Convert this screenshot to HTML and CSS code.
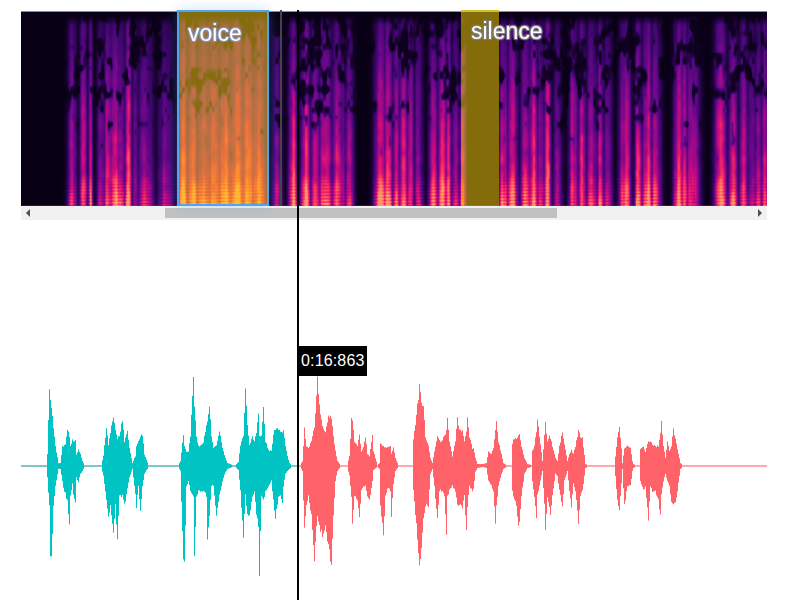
FILE: index.html
```html
<!DOCTYPE html>
<html lang="en">
<head>
  <meta charset="UTF-8">
  <title>Audio annotator</title>
  <link rel="stylesheet" href="styles.css">
</head>
<body>

<div class="editor">
  <div class="spectro">
    <canvas id="spectroCanvas" width="746" height="194"></canvas>
    <div class="region region-voice"><span class="region-label">voice</span></div>
    <div class="region region-silence"><span class="region-label">silence</span></div>
    <div class="progress-mark"></div>
  </div>

  <div class="scrollbar">
    <span class="arrow arrow-left"></span>
    <div class="track"><div class="thumb"></div></div>
    <span class="arrow arrow-right"></span>
  </div>

  <div class="wave">
    <canvas id="waveCanvas" width="746" height="254"></canvas>
    <div class="time-tip">0:16:863</div>
  </div>

  <div class="cursor"></div>
</div>

<script src="app.js"></script>
</body>
</html>
```

FILE: styles.css
```css
body {
  margin: 0;
  background: #fff;
  font-family: 'Liberation Sans', Arial, sans-serif;
  overflow: hidden;
}
.editor {
  position: relative;
  width: 746px;
  height: 600px;
  margin-left: 21px;
  padding-top: 11px;
  box-sizing: border-box;
}
.spectro {
  position: relative;
  height: 195px;
  border-top: 1px solid #8f8d94;
  box-sizing: border-box;
}
.spectro canvas {
  display: block;
}
.region {
  position: absolute;
  top: -2px;
  bottom: 0;
  background: rgba(255, 215, 0, 0.5);
  box-sizing: border-box;
}
.region-voice {
  left: 156px;
  width: 92px;
  border: 2px solid #4fa6ee;
  box-shadow: 0 0 12px rgba(79, 166, 238, 0.3);
}
.region-silence {
  left: 440px;
  width: 38px;
  border-top: 2px solid #d9bf2e;
}
.region-label {
  position: absolute;
  top: 8px;
  left: 9px;
  font-size: 23px;
  line-height: 26px;
  color: #fff;
  text-shadow: 1px 1px 1px #8a93b8, -1px -1px 1px #8a93b8, 1px -1px 1px #8a93b8, -1px 1px 1px #8a93b8, 0 0 2px #8a93b8;
}
.region-silence .region-label {
  left: 10px;
  top: 6px;
  text-shadow: 1px 1px 1px #808080, -1px -1px 1px #808080, 1px -1px 1px #808080, -1px 1px 1px #808080, 0 0 2px #808080;
}
.progress-mark {
  position: absolute;
  top: -2px;
  bottom: 0;
  left: 259px;
  width: 2px;
  background: #444;
}
.scrollbar {
  display: flex;
  align-items: center;
  height: 14px;
  background: #f1f1f1;
}
.arrow {
  width: 0;
  height: 0;
  border-top: 4px solid transparent;
  border-bottom: 4px solid transparent;
}
.arrow-left {
  margin-left: 5px;
  border-right: 4px solid #505050;
}
.arrow-right {
  margin-right: 5px;
  border-left: 4px solid #505050;
}
.track {
  flex: 1;
  height: 10px;
  padding-left: 135px;
}
.thumb {
  width: 392px;
  height: 10px;
  background: #c1c1c1;
}
.wave {
  position: relative;
  margin-top: 126px;
}
.wave canvas {
  display: block;
  filter: blur(0.5px);
}
.time-tip {
  position: absolute;
  top: 0;
  left: 277px;
  padding: 0 3px 0 3px;
  line-height: 30px;
  font-size: 16px;
  letter-spacing: 0.15px;
  color: #fff;
  background: #000;
}
.cursor {
  position: absolute;
  top: 10px;
  bottom: 0;
  left: 276px;
  width: 2px;
  background: #000;
}
```

FILE: app.js
```js
// little seeded noise so every render gives the same picture
function hash(x, y) {
  const s = Math.sin(x * 127.1 + y * 311.7) * 43758.5453;
  return s - Math.floor(s);
}
function smoothNoise(x, y) {
  const ix = Math.floor(x), iy = Math.floor(y);
  let fx = x - ix, fy = y - iy;
  fx = fx * fx * (3 - 2 * fx);
  fy = fy * fy * (3 - 2 * fy);
  const a = hash(ix, iy), b = hash(ix + 1, iy);
  const c = hash(ix, iy + 1), d = hash(ix + 1, iy + 1);
  return (a + (b - a) * fx) * (1 - fy) + (c + (d - c) * fx) * fy;
}

// --- spectrogram ---
// [page x, half width, strength]
const columns = [
  [72, 4, .66], [83, 3, .86], [90, 2, .76], [101, 4, .6], [108, 5, .74], [114, 6, .82],
  [120, 4, .66], [128, 3, .9], [135, 3, .55], [145, 7, .6], [165, 6, .56],
  [183, 4, .92], [192, 5, .98], [203, 6, .92], [214, 5, .96], [225, 6, 1], [236, 6, 1], [247, 6, .92], [258, 6, .94],
  [277, 4, .56], [293, 4, .86], [305, 4, .92], [315, 5, .76], [325, 6, .8], [338, 6, .76], [349, 4, .66],
  [380, 5, .86], [388, 4, .88], [396, 4, .76], [403, 4, .82], [410, 4, .66], [418, 4, .58],
  [433, 4, .72], [442, 4, .86], [448, 3, .76], [455, 4, .6], [462, 3, .6],
  [503, 4, .76], [512, 5, .76], [525, 4, .76], [533, 4, .9], [540, 4, .66], [547, 3, .94], [557, 4, .58],
  [573, 4, .82], [582, 4, .76], [592, 6, .66], [600, 3, .78], [607, 4, .62],
  [625, 5, .82], [638, 3, .88], [647, 5, .88], [655, 5, .66], [678, 4, .86], [684, 3, .82], [692, 6, .76],
  [720, 5, .86], [733, 4, .82], [743, 4, .82], [752, 4, .6], [758, 4, .66], [765, 4, .76]
];
const inferno = [
  [0, 8, 0, 20], [.24, 62, 6, 112], [.42, 118, 8, 142], [.6, 205, 10, 122],
  [.8, 255, 60, 92], [1, 255, 150, 104]
];
function colorAt(v) {
  v = Math.max(0, Math.min(1, v));
  for (let i = 1; i < inferno.length; i++) {
    if (v <= inferno[i][0]) {
      const p = inferno[i - 1], q = inferno[i];
      const t = (v - p[0]) / (q[0] - p[0]);
      return [p[1] + (q[1] - p[1]) * t, p[2] + (q[2] - p[2]) * t, p[3] + (q[3] - p[3]) * t];
    }
  }
  return inferno[inferno.length - 1].slice(1);
}
function columnStrength(px) {
  if (px > 466 && px < 499) return 0;
  let best = 0;
  columns.forEach(c => {
    const d = (px - c[0]) / c[1];
    best = Math.max(best, c[2] * Math.exp(-d * d * .7));
  });
  return best;
}
function drawSpectro() {
  const canvas = document.getElementById('spectroCanvas');
  const ctx = canvas.getContext('2d');
  const img = ctx.createImageData(canvas.width, canvas.height);
  for (let x = 0; x < canvas.width; x++) {
    const c = columnStrength(x + 21) * (.78 + .34 * smoothNoise(x / 2.5, 7));
    const voice = x > 156 && x < 248;
    for (let y = 0; y < canvas.height; y++) {
      const t = y / canvas.height;
      const blotch = smoothNoise(x / 8, y / 16) * .6 + smoothNoise(x / 3, y / 7) * .4;
      const fade = Math.min(1, Math.max(.05, (t - .015) / .05));
      // dark holes in the upper half, gone towards the low frequencies
      const hole = Math.max(.12, Math.min(1, (blotch - .3) / .2 + Math.max(0, t - .4) * 5 + (voice ? .25 : 0)));
      let v = c * (.3 + .66 * t) * (.8 + .45 * blotch) * fade * hole * (voice ? .9 : 1);
      if (t > .82) {
        const stripes = .5 + .5 * Math.sin(y * 1.9 + x * .05);
        const patch = smoothNoise(x / 8, 3);
        v += c * ((t - .82) / .18) * (.15 + .26 * stripes) * (.3 + 1.2 * patch);
      }
      if (t > .99) v = Math.max(v, c * .7 + .22);
      const rgb = colorAt(v);
      const i = (y * canvas.width + x) * 4;
      img.data[i] = rgb[0];
      img.data[i + 1] = rgb[1];
      img.data[i + 2] = rgb[2];
      img.data[i + 3] = 255;
    }
  }
  ctx.putImageData(img, 0, 0);
}

// --- waveform ---
// [page x, amplitude up, amplitude down]
const envelope = [
  [21,1,1],[46,1,1],[47,12,12],[49,81,40],[50,70,93],[51,60,92],[53,40,40],[55,20,20],[58,3,3],[60,3,3],
  [62,20,15],[63,20,22],[65,22,28],[67,36,35],[68,35,50],[69,30,62],[70,20,30],[72,27,18],[73,26,30],[75,25,35],[76,12,12],[78,17,16],[80,12,8],[82,5,5],[84,1,1],
  [101,1,1],[103,10,10],[106,40,35],[108,20,50],[110,35,40],[113,50,69],[115,35,40],[117,28,76],[119,30,30],[122,47,30],[124,25,40],[127,36,22],[129,18,12],[132,3,3],
  [135,10,28],[136,20,41],[138,25,20],[140,30,46],[142,32,20],[144,12,8],[148,1,1],
  [178,1,1],[180,5,5],[183,32,98],[184,20,98],[186,15,20],[188,15,15],[190,30,25],[193,92,30],[194,60,91],[196,30,30],[198,20,25],[200,20,25],[203,25,25],[206,40,30],[207,45,71],[209,61,50],[211,30,20],[213,18,20],[216,20,48],[219,36,30],[222,18,15],[225,8,6],[227,3,3],
  [232,1,1],[235,1,1],[238,4,4],[240,21,25],[243,30,71],[245,82,30],[247,40,50],[249,22,50],[252,29,30],[254,25,25],[256,35,50],[258,54,60],[259,30,108],[261,30,30],[263,59,35],[265,25,25],[268,16,20],[271,15,15],[274,38,45],[275,38,53],[278,38,30],[280,36,30],[282,35,39],[283,37,20],[285,20,8],[287,10,5],[289,3,3],[291,1,1],
  [300,1,1],[302,5,5],[304,37,64],[306,20,40],[308,18,30],[311,25,50],[314,40,98],[316,70,60],[317,91,50],[319,60,60],[322,39,70],[325,35,60],[328,51,80],[331,50,101],[333,30,50],[335,15,15],[337,5,5],[340,1,1],[347,1,1],
  [349,10,10],[351,47,30],[352,45,56],[354,25,30],[357,20,35],[359,31,54],[361,15,25],[363,20,20],[365,30,20],[367,12,30],[369,10,35],[372,32,15],[373,15,4],[377,1,1],
  [379,3,3],[380,22,40],[383,20,69],[385,18,30],[387,18,22],[390,20,25],[391,12,50],[393,18,18],[395,8,5],[398,1,1],
  [412,1,1],[413,28,25],[416,50,60],[419,80,100],[421,65,80],[423,59,55],[425,30,40],[428,20,40],[430,8,8],[432,3,3],
  [434,15,20],[437,31,55],[439,25,25],[442,25,25],[444,32,30],[446,35,70],[447,47,30],[449,25,25],[452,10,20],[455,25,25],[457,49,38],[458,40,41],[460,35,40],[462,35,42],[464,25,30],[466,35,65],[467,47,40],[469,30,20],[472,18,25],[473,19,24],[475,8,6],[477,2,2],
  [483,2,1],[486,3,2],[488,15,15],[491,12,20],[493,18,25],[495,35,61],[496,44,40],[498,25,20],[501,12,8],[503,3,3],[506,1,1],[511,1,1],
  [512,22,25],[513,27,30],[516,28,40],[518,30,63],[519,31,55],[521,20,30],[524,8,8],[527,2,2],[531,1,1],
  [532,15,15],[534,20,30],[536,35,55],[537,49,30],[539,30,20],[542,5,5],[544,30,40],[545,44,65],[547,25,30],[549,30,40],[550,28,50],[552,20,30],[555,8,8],[557,5,10],[559,20,25],[562,34,40],[564,22,15],[567,5,5],
  [569,12,25],[571,16,40],[573,12,18],[575,20,25],[578,35,56],[580,30,30],[582,28,25],[585,2,2],[587,1,1],[614,1,1],
  [615,10,10],[617,30,35],[619,40,43],[621,18,18],[622,3,3],[624,18,40],[627,20,20],[630,18,20],[632,5,5],[633,2,2],[635,1,1],[639,1,1],
  [640,18,15],[643,19,25],[645,15,20],[648,25,53],[650,25,20],[652,22,25],[655,20,25],[658,20,35],[660,35,50],[661,45,30],[663,20,15],[665,8,8],[667,25,15],[669,15,20],[671,20,35],[673,37,40],[675,28,38],[677,18,25],[680,3,3],[682,1,1],[767,1,1]
];
function amplitudes(px) {
  for (let i = 1; i < envelope.length; i++) {
    if (px <= envelope[i][0]) {
      const p = envelope[i - 1], q = envelope[i];
      const t = (px - p[0]) / (q[0] - p[0]);
      return [p[1] + (q[1] - p[1]) * t, p[2] + (q[2] - p[2]) * t];
    }
  }
  return [1, 1];
}
function drawWave() {
  const canvas = document.getElementById('waveCanvas');
  const ctx = canvas.getContext('2d');
  const mid = 120;
  for (let x = 0; x < canvas.width; x++) {
    const px = x + 21;
    const played = px < 297;
    const a = amplitudes(px);
    ctx.fillStyle = played ? '#7cc8c8' : '#ffa8ab';
    ctx.fillRect(x, mid - 1, 1, 2);
    if (a[0] > 1.1 || a[1] > 1.1) {
      const up = a[0] * (.94 + .1 * hash(x, 1));
      const down = a[1] * (.94 + .1 * hash(x, 2));
      ctx.fillStyle = played ? '#00c3c3' : '#ff6269';
      ctx.fillRect(x, mid - up, 1, up + down);
    }
  }
}

drawSpectro();
drawWave();
```
